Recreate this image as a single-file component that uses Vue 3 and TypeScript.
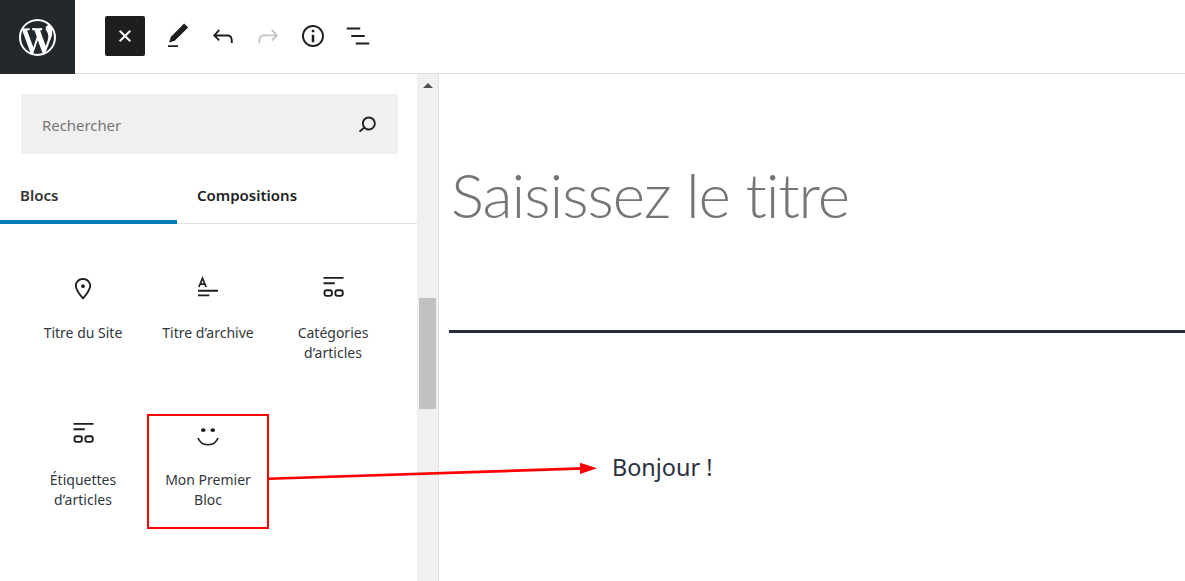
<template>
  <div class="editor">
    <header class="topbar">
      <div class="logo">
        <svg viewBox="0 0 20 20" width="37" height="37" fill="#fff">
          <path :d="icons.wp" />
        </svg>
      </div>
      <div class="tools">
        <button class="close-btn">
          <svg viewBox="0 0 24 24" width="24" height="24" fill="none" stroke="#fff" stroke-width="2">
            <path d="M6.7 6.7l10.6 10.6M17.3 6.7L6.7 17.3" />
          </svg>
        </button>
        <button v-for="tool in tools" :key="tool.name" class="tool" :class="{ off: tool.off }">
          <svg viewBox="0 0 24 24" width="30" height="30" fill="currentColor">
            <path :d="tool.d" />
          </svg>
        </button>
      </div>
    </header>

    <div class="body">
      <aside class="sidebar">
        <div class="panel">
          <div class="search">
            <span class="placeholder">Rechercher</span>
            <svg viewBox="0 0 24 24" width="30" height="30" fill="#1e1e1e">
              <path :d="icons.search" />
            </svg>
          </div>
          <div class="tabs">
            <div class="tab active">Blocs</div>
            <div class="tab">Compositions</div>
          </div>
          <div class="grid">
            <div v-for="block in blocks" :key="block.label" class="block">
              <svg viewBox="0 0 24 24" width="30" height="30" fill="none" stroke="#1e1e1e" stroke-width="1.5">
                <template v-if="block.icon === 'pin'">
                  <path :d="icons.pin" fill="#1e1e1e" stroke="none" />
                </template>
                <template v-else-if="block.icon === 'archive'">
                  <path d="M4.7 11.2L7.6 4.2l2.9 7M5.8 8.9h3.6" stroke-width="1.4" />
                  <path d="M4 14.2h16M4 17.9h9" />
                </template>
                <template v-else-if="block.icon === 'terms'">
                  <path d="M4.4 3.9h16M4.4 8.2h9" />
                  <rect x="5.2" y="13.75" width="5.9" height="4.5" rx="1.6" />
                  <rect x="13.9" y="13.75" width="5.9" height="4.5" rx="1.6" />
                </template>
                <template v-else>
                  <ellipse cx="8.2" cy="8.8" rx="1.9" ry="1.5" fill="#1e1e1e" stroke="none" />
                  <ellipse cx="15.8" cy="8.8" rx="1.9" ry="1.5" fill="#1e1e1e" stroke="none" />
                  <path d="M4 15.2c1.4 3.6 4.4 5.4 8 5.4s6.6-1.8 8-5.4" stroke-width="1.3" />
                </template>
              </svg>
              <span class="label" v-html="block.label"></span>
            </div>
          </div>
        </div>
        <div class="scrollbar">
          <div class="arrow"></div>
          <div class="thumb"></div>
        </div>
      </aside>

      <main class="content">
        <h1 class="title">Saisissez le titre</h1>
        <hr class="rule" />
        <p class="para">Bonjour !</p>
      </main>
    </div>

    <!-- annotation drawn over the screenshot -->
    <div class="callout"></div>
    <svg class="arrow-line" width="1185" height="581">
      <path d="M269 478.8L584 468.4" stroke="#f00" stroke-width="2.6" fill="none" />
      <path d="M597 468.3L580 462.7V474z" fill="#f00" />
    </svg>
  </div>
</template>

<script setup lang="ts">
const icons = {
  wp: 'M20 10c0-5.51-4.49-10-10-10C4.48 0 0 4.49 0 10c0 5.52 4.48 10 10 10 5.51 0 10-4.48 10-10zM7.78 15.37L4.37 6.22c.55-.02 1.17-.08 1.17-.08.5-.06.44-1.13-.06-1.11 0 0-1.45.11-2.37.11-.18 0-.37 0-.58-.01C4.12 2.69 6.87 1.11 10 1.11c2.33 0 4.45.87 6.05 2.34-.68-.11-1.65.39-1.65 1.58 0 .74.45 1.36.9 2.1.35.61.55 1.36.55 2.46 0 1.49-1.4 5-1.4 5l-3.03-8.37c.54-.02.82-.17.82-.17.5-.05.44-1.25-.06-1.22 0 0-1.44.12-2.38.12-.87 0-2.33-.12-2.33-.12-.5-.03-.56 1.2-.06 1.22l.92.08 1.26 3.41zM17.41 10c.24-.64.74-1.87.43-4.25.7 1.29 1.05 2.71 1.05 4.25 0 3.29-1.73 6.24-4.4 7.78.97-2.59 1.94-5.2 2.92-7.78zM6.1 18.09C3.12 16.65 1.11 13.53 1.11 10c0-1.3.23-2.48.72-3.59C3.25 10.3 4.67 14.2 6.1 18.09zm4.03-6.63l2.58 6.98c-.86.29-1.76.45-2.71.45-.79 0-1.57-.11-2.29-.33.81-2.38 1.62-4.74 2.42-7.1z',
  search: 'M13.5 6C10.5 6 8 8.5 8 11.5c0 1.1.3 2.1.9 3l-3.4 3 1 1.1 3.4-2.9c1 .9 2.2 1.4 3.6 1.4 3 0 5.5-2.5 5.5-5.5C19 8.5 16.5 6 13.5 6zm0 9.5c-2.2 0-4-1.8-4-4s1.8-4 4-4 4 1.8 4 4-1.8 4-4 4z',
  pin: 'M12 9c-.8 0-1.5.7-1.5 1.5S11.2 12 12 12s1.5-.7 1.5-1.5S12.8 9 12 9zm0-5c-3.6 0-6.5 2.8-6.5 6.2 0 .8.3 1.8.9 3.1.5 1.1 1.2 2.3 2 3.6.7 1 3 3.8 3.2 3.9l.4.5.4-.5c.2-.2 2.6-2.9 3.2-3.9.8-1.2 1.5-2.5 2-3.6.6-1.3.9-2.3.9-3.1C18.5 6.8 15.6 4 12 4zm4.3 8.7c-.5 1-1.1 2.2-1.9 3.4-.5.7-1.7 2.2-2.4 3-.7-.8-1.9-2.3-2.4-3-.8-1.2-1.4-2.3-1.9-3.3-.6-1.4-.7-2.2-.7-2.5 0-2.6 2.2-4.7 5-4.7s5 2.1 5 4.7c0 .2-.1 1-.7 2.4z',
}

const tools = [
  { name: 'edit', d: 'M20.1 5.1L16.9 2 6.2 12.7l-1.3 4.4 4.5-1.3L20.1 5.1zM4 20.8h8v-1.5H4v1.5z' },
  { name: 'undo', d: 'M18.3 11.7c-.6-.6-1.4-.9-2.3-.9H6.7l2.9-3.3-1.1-1-4.5 5L8.5 16l1-1-2.7-2.7H16c.5 0 .9.2 1.3.5 1 1 1 3.4 1 4.5v.3h1.5v-.2c0-1.5 0-4.3-1.5-5.7z' },
  { name: 'redo', off: true, d: 'M15.6 6.5l-1.1 1 2.9 3.3H8c-.9 0-1.7.3-2.3.9-1.4 1.5-1.4 4.2-1.4 5.6v.2h1.5v-.3c0-1.1 0-3.5 1-4.5.3-.3.7-.5 1.3-.5h9.2L14.5 15l1.1 1.1 4.6-4.6-4.6-5z' },
  { name: 'info', d: 'M12 3.2c-4.8 0-8.8 3.9-8.8 8.8 0 4.8 3.9 8.8 8.8 8.8 4.8 0 8.8-3.9 8.8-8.8 0-4.8-4-8.8-8.8-8.8zm0 16c-4 0-7.2-3.3-7.2-7.2C4.8 8 8 4.8 12 4.8s7.2 3.3 7.2 7.2c0 4-3.2 7.2-7.2 7.2zM11 17h2v-6h-2v6zm0-8h2V7h-2v2z' },
  { name: 'list', d: 'M13.8 5.2H3v1.5h10.8V5.2zm-3.6 12v1.5H21v-1.5H10.2zm7.2-6H6.6v1.5h10.8v-1.5z' },
]

const blocks = [
  { icon: 'pin', label: 'Titre du Site' },
  { icon: 'archive', label: 'Titre d’archive' },
  { icon: 'terms', label: 'Catégories<br>d’articles' },
  { icon: 'terms', label: 'Étiquettes<br>d’articles' },
  { icon: 'smile', label: 'Mon Premier<br>Bloc' },
]
</script>

<style>
html,
body {
  margin: 0;
  height: 100%;
  overflow: hidden;
  background: #fff;
}
</style>

<style scoped>
.editor {
  position: relative;
  width: 1185px;
  height: 581px;
  overflow: hidden;
  font-family: "Noto Sans", "Open Sans", sans-serif;
  color: #1e1e1e;
  background: #fff;
}

.topbar {
  display: flex;
  height: 73px;
  border-bottom: 1px solid #e0e0e0;
}

.logo {
  width: 75px;
  height: 74px;
  background: #23282d;
  display: flex;
  align-items: center;
  justify-content: center;
  flex-shrink: 0;
}

.tools {
  display: flex;
  align-items: center;
  padding: 0 0 1px 30px;
}

button {
  border: 0;
  padding: 0;
  background: none;
  display: flex;
  align-items: center;
  justify-content: center;
}

.close-btn {
  width: 40px;
  height: 40px;
  background: #1e1e1e;
  border-radius: 2px;
  margin-right: 10px;
}

.tool {
  width: 45px;
  height: 40px;
  color: #1e1e1e;
}

.tool.off {
  color: #c4c4c4;
}

.body {
  display: flex;
  height: 507px;
}

.sidebar {
  width: 439px;
  display: flex;
  flex-shrink: 0;
  border-right: 1px solid #e0e0e0;
  box-sizing: border-box;
}

.panel {
  width: 417px;
  flex-shrink: 0;
}

.search {
  margin: 20px 19px 0 21px;
  height: 60px;
  background: #f0f0f0;
  border-radius: 2px;
  display: flex;
  align-items: center;
  justify-content: space-between;
  padding: 0 16px 0 21px;
  box-sizing: border-box;
}

.placeholder {
  font-size: 14.9px;
  line-height: 20px;
  padding-top: 2px;
  color: #757575;
}

.tabs {
  display: flex;
  margin-top: 21px;
  height: 49px;
  box-sizing: border-box;
  border-bottom: 1px solid #e0e0e0;
}

.tab {
  width: 177px;
  box-sizing: border-box;
  padding: 10px 0 0 20px;
  font-size: 15px;
  font-weight: 600;
  line-height: 20px;
  color: #1e1e1e;
}

.tab.active {
  border-bottom: 4px solid #007cba;
  height: 49px;
  color: #333;
}

.grid {
  display: grid;
  grid-template-columns: repeat(3, 125px);
  grid-auto-rows: 147px;
  padding: 49px 0 0 20.5px;
}

.block {
  display: flex;
  flex-direction: column;
  align-items: center;
  text-align: center;
}

.block:nth-child(n + 4) svg {
  margin-top: -1px;
}

.label {
  margin-top: 20px;
  font-size: 14px;
  line-height: 20px;
  color: #32373c;
}

.block:nth-child(n + 4) .label {
  margin-top: 21px;
}

.scrollbar {
  width: 21px;
  background: #f0f0f0;
  display: flex;
  flex-direction: column;
  align-items: center;
}

.arrow {
  margin-top: 9px;
  width: 0;
  height: 0;
  border-left: 5px solid transparent;
  border-right: 5px solid transparent;
  border-bottom: 5px solid #505050;
}

.thumb {
  width: 17px;
  height: 111px;
  margin-top: 210px;
  background: #c1c1c1;
}

.content {
  flex: 1;
  padding-left: 10px;
}

.title {
  margin: 79px 0 0 2px;
  font-family: "Lato", sans-serif;
  font-size: 62px;
  font-weight: 300;
  letter-spacing: -1.1px;
  line-height: 82px;
  color: #757575;
}

.rule {
  margin: 95px 0 0;
  border: 0;
  height: 3px;
  background: #282d3a;
}

.para {
  margin: 117px 0 0 163px;
  font-size: 23.4px;
  line-height: 34px;
  color: #2a3040;
}

.callout {
  position: absolute;
  left: 147px;
  top: 414px;
  width: 122px;
  height: 115px;
  box-sizing: border-box;
  border: 2px solid #f00;
}

.arrow-line {
  position: absolute;
  left: 0;
  top: 0;
  pointer-events: none;
}
</style>
